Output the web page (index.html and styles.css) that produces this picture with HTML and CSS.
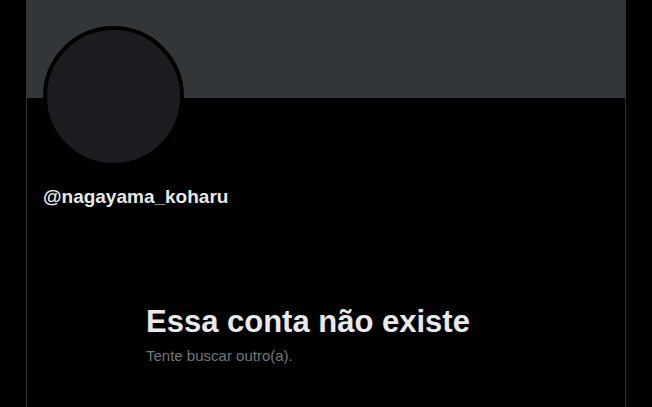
FILE: index.html
```html
<!DOCTYPE html>
<html lang="pt">
  <head>
    <meta charset="UTF-8" />
    <meta name="viewport" content="width=device-width, initial-scale=1.0" />
    <title>@nagayama_koharu</title>
    <link rel="stylesheet" href="styles.css">
  </head>
  <body>
    <main class="coluna">
      <div class="banner"></div>
      <div class="perfil">
        <div class="avatar"></div>
        <div class="handle">@nagayama_koharu</div>
      </div>
      <div class="vazio">
        <h1>Essa conta não existe</h1>
        <p>Tente buscar outro(a).</p>
      </div>
    </main>
  </body>
</html>
```

FILE: styles.css
```css
body {
  margin: 0;
  background: #000;
  font-family: "Liberation Sans", Arial, sans-serif;
  color: #e7e9ea;
}
.coluna {
  width: 598px;
  min-height: 407px;
  margin: 0 auto;
  border-left: 1px solid #2f3336;
  border-right: 1px solid #2f3336;
}
.banner {
  height: 98px;
  background: #333639;
}
.perfil {
  padding: 0 16px;
}
.avatar {
  width: 133px;
  height: 133px;
  margin-top: -72px;
  border: 4px solid #000;
  border-radius: 50%;
  background: #1b1c1f;
}
.handle {
  margin-top: 18px;
  font-size: 19px;
  font-weight: 700;
  line-height: 24px;
}
.vazio {
  padding: 95px 0 0 119px;
}
.vazio h1 {
  margin: 0;
  font-size: 31px;
  font-weight: 700;
  line-height: 36px;
}
.vazio p {
  margin: 6px 0 0;
  font-size: 15px;
  line-height: 20px;
  color: #71767b;
}
```
